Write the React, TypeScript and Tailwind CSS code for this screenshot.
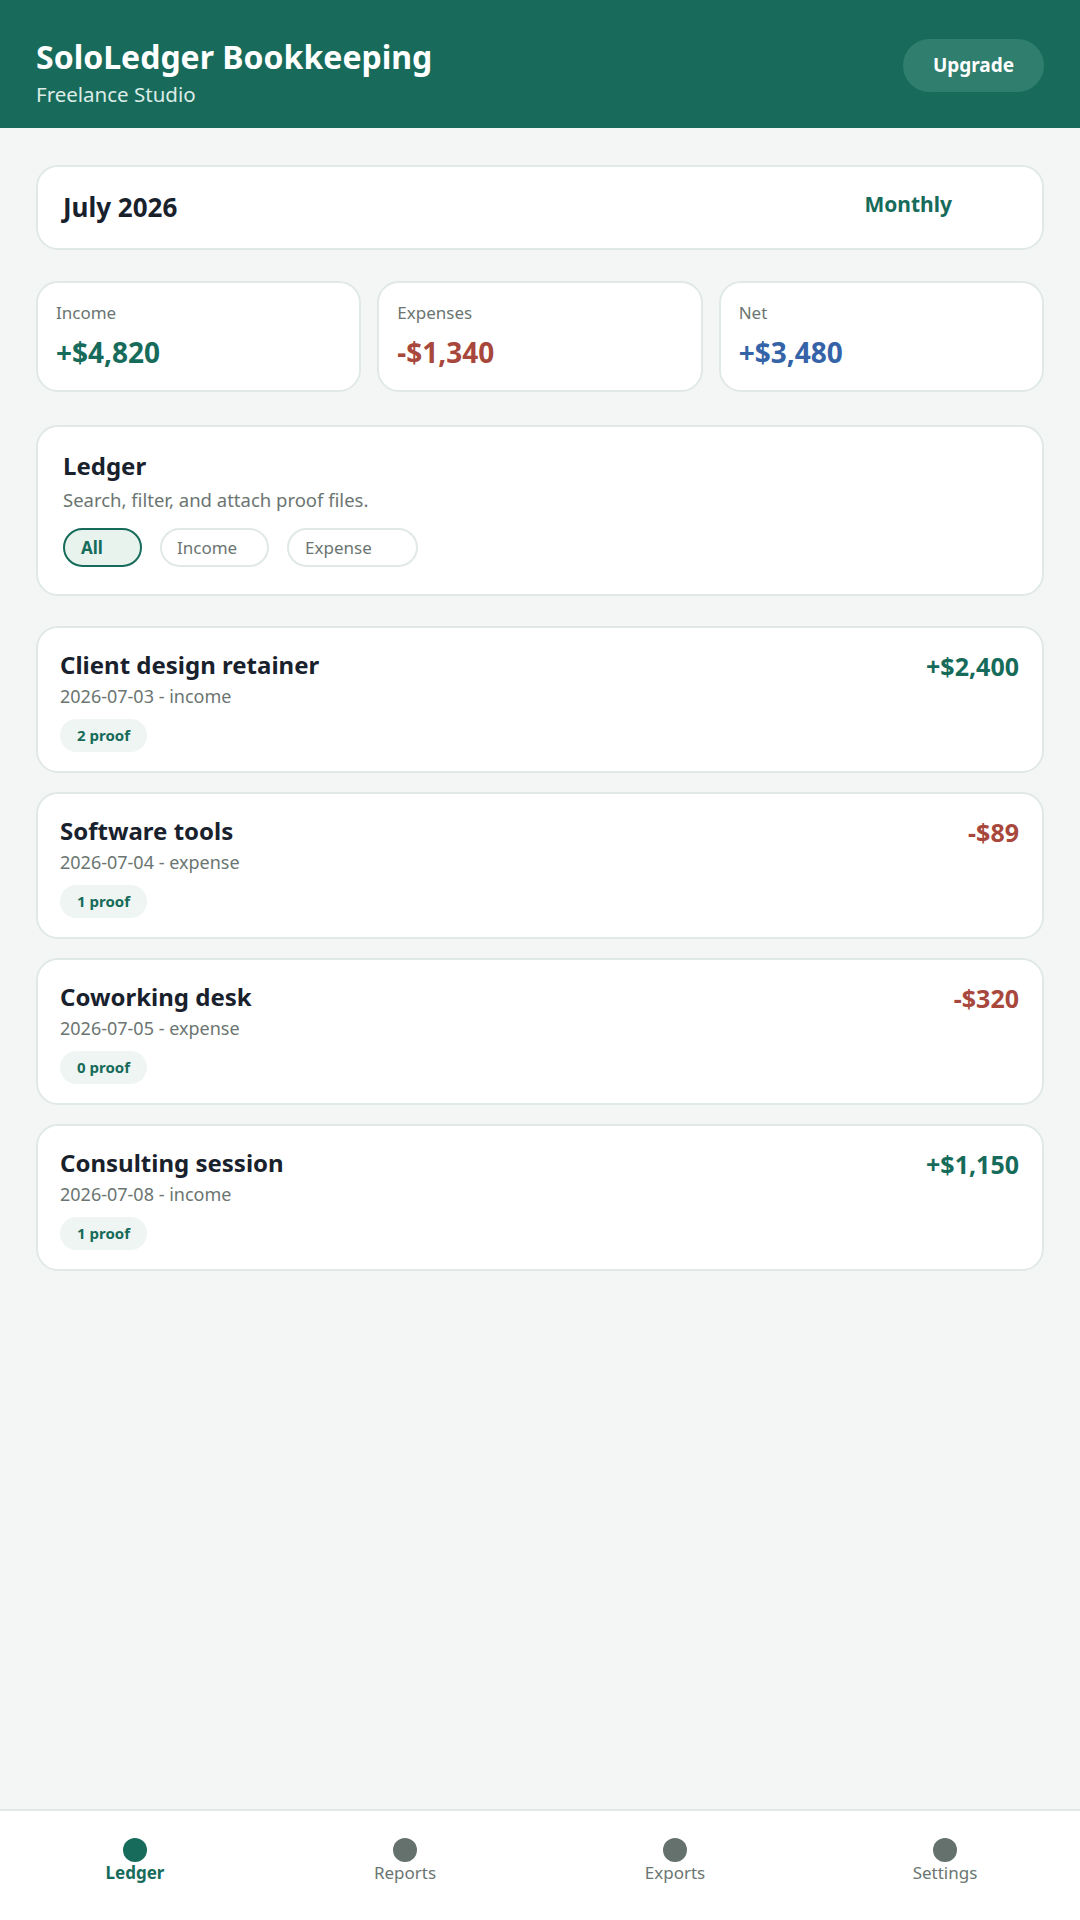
const transactions = [
  { title: "Client design retainer", date: "2026-07-03", kind: "income", amount: "+$2,400", proofs: 2 },
  { title: "Software tools", date: "2026-07-04", kind: "expense", amount: "-$89", proofs: 1 },
  { title: "Coworking desk", date: "2026-07-05", kind: "expense", amount: "-$320", proofs: 0 },
  { title: "Consulting session", date: "2026-07-08", kind: "income", amount: "+$1,150", proofs: 1 },
];

const stats = [
  { label: "Income", value: "+$4,820", color: "text-[#176b5a]" },
  { label: "Expenses", value: "-$1,340", color: "text-[#a8473c]" },
  { label: "Net", value: "+$3,480", color: "text-[#3563a8]" },
];

const tabs = ["Ledger", "Reports", "Exports", "Settings"];

export default function App() {
  return (
    <div className="flex h-[1920px] flex-col bg-[#f4f6f5] font-['Noto_Sans',sans-serif]">
      {/* Header */}
      <header className="flex h-[128px] items-start justify-between bg-[#186b5b] px-9 pt-[35px]">
        <div>
          <h1 className="text-[32px] leading-[44px] font-bold text-white">SoloLedger Bookkeeping</h1>
          <p className="mt-[2px] text-[20.5px] leading-[27px] text-[#dcece7]">Freelance Studio</p>
        </div>
        <button className="mt-[4px] h-[53px] w-[141px] rounded-full bg-[#2f7e6e] text-[19px] font-bold text-white">
          Upgrade
        </button>
      </header>

      <main className="flex-1 px-9 pt-[37px]">
        {/* Period */}
        <div className="flex h-[85px] items-center justify-between rounded-[22px] border-2 border-[#e1e9e5] bg-white pl-[25px] pr-[90px]">
          <span className="text-[26px] font-bold text-[#18212c]">July 2026</span>
          <span className="-mt-[6px] text-[21px] font-bold text-[#176b5a]">Monthly</span>
        </div>

        {/* Stats */}
        <div className="mt-[31px] grid grid-cols-3 gap-4">
          {stats.map((s) => (
            <div key={s.label} className="rounded-[22px] border-2 border-[#e1e9e5] bg-white px-[18px] pt-[18px] pb-[19px]">
              <div className="text-[17px] leading-[23px] text-[#6b7571]">{s.label}</div>
              <div className={`mt-[10px] text-[28px] leading-[37px] font-bold ${s.color}`}>{s.value}</div>
            </div>
          ))}
        </div>

        {/* Ledger filter */}
        <div className="mt-[33px] rounded-[22px] border-2 border-[#e1e9e5] bg-white px-[25px] pt-[22px] pb-[27px]">
          <h2 className="text-[24px] leading-[33px] font-bold text-[#18212c]">Ledger</h2>
          <p className="mt-[5px] text-[18.5px] leading-[25px] text-[#6b7571]">Search, filter, and attach proof files.</p>
          <div className="mt-[16px] flex gap-[18px]">
            <button className="h-[39px] w-[79px] rounded-full border-2 border-[#176b5a] bg-[#e8f3ee] pl-[16px] text-left text-[17px] font-bold text-[#176b5a]">
              All
            </button>
            <button className="h-[39px] w-[109px] rounded-full border-2 border-[#e1e9e5] bg-white pl-[15px] text-left text-[17px] text-[#6b7571]">
              Income
            </button>
            <button className="h-[39px] w-[131px] rounded-full border-2 border-[#e1e9e5] bg-white pl-[16px] text-left text-[17px] text-[#6b7571]">
              Expense
            </button>
          </div>
        </div>

        {/* Transactions */}
        <div className="mt-[30px] flex flex-col gap-[19px]">
          {transactions.map((t) => (
            <div key={t.title} className="flex justify-between rounded-[22px] border-2 border-[#e1e9e5] bg-white pl-[22px] pr-[23px] pt-[20px] pb-[19px]">
              <div>
                <div className="text-[24px] leading-[33px] font-bold text-[#18212c]">{t.title}</div>
                <div className="mt-[4px] text-[18px] leading-[23px] text-[#6b7571]">
                  {t.date} - {t.kind}
                </div>
                <div className="mt-[11px] inline-flex h-[33px] items-center rounded-full bg-[#eef5f2] px-[17px] text-[15px] font-bold text-[#176b5a]">
                  {t.proofs} proof
                </div>
              </div>
              <div
                className={`mt-[2px] text-[25px] leading-[33px] font-bold ${
                  t.kind === "income" ? "text-[#176b5a]" : "text-[#a8473c]"
                }`}
              >
                {t.amount}
              </div>
            </div>
          ))}
        </div>
      </main>

      {/* Bottom nav */}
      <nav className="grid h-[111px] grid-cols-4 border-t-2 border-[#e1e9e5] bg-white pt-[27px]">
        {tabs.map((tab, i) => (
          <div key={tab} className="flex flex-col items-center">
            <span className={`h-[24px] w-[24px] rounded-full ${i === 0 ? "bg-[#176b5a]" : "bg-[#65716c]"}`} />
            <span
              className={`text-[17px] leading-[22px] ${
                i === 0 ? "font-bold text-[#176b5a]" : "text-[#6b7571]"
              }`}
            >
              {tab}
            </span>
          </div>
        ))}
      </nav>
    </div>
  );
}
